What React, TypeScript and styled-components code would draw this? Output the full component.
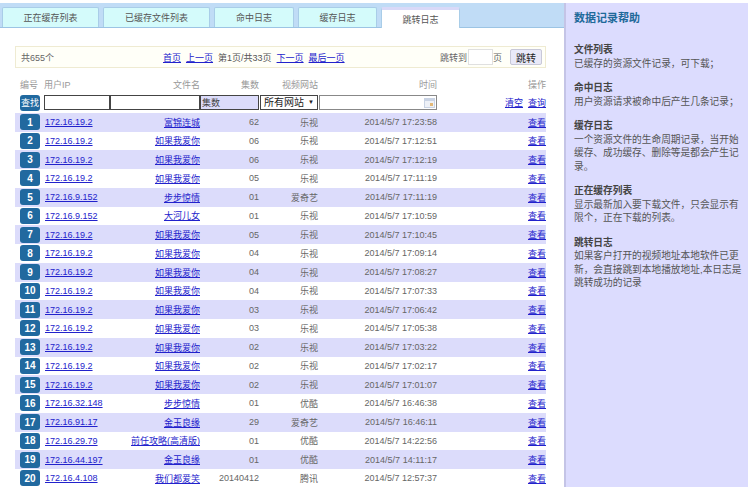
import styled, { createGlobalStyle } from 'styled-components'

const tabs = ['正在缓存列表', '已缓存文件列表', '命中日志', '缓存日志', '跳转日志']
const tabWidths = [97, 107, 80, 79, 79]

const rows = [
  ['172.16.19.2', '富锦连城', '62', '乐视', '2014/5/7 17:23:58'],
  ['172.16.19.2', '如果我爱你', '06', '乐视', '2014/5/7 17:12:51'],
  ['172.16.19.2', '如果我爱你', '06', '乐视', '2014/5/7 17:12:19'],
  ['172.16.19.2', '如果我爱你', '05', '乐视', '2014/5/7 17:11:19'],
  ['172.16.9.152', '步步惊情', '01', '爱奇艺', '2014/5/7 17:11:19'],
  ['172.16.9.152', '大河儿女', '01', '乐视', '2014/5/7 17:10:59'],
  ['172.16.19.2', '如果我爱你', '05', '乐视', '2014/5/7 17:10:45'],
  ['172.16.19.2', '如果我爱你', '04', '乐视', '2014/5/7 17:09:14'],
  ['172.16.19.2', '如果我爱你', '04', '乐视', '2014/5/7 17:08:27'],
  ['172.16.19.2', '如果我爱你', '04', '乐视', '2014/5/7 17:07:33'],
  ['172.16.19.2', '如果我爱你', '03', '乐视', '2014/5/7 17:06:42'],
  ['172.16.19.2', '如果我爱你', '03', '乐视', '2014/5/7 17:05:38'],
  ['172.16.19.2', '如果我爱你', '02', '乐视', '2014/5/7 17:03:22'],
  ['172.16.19.2', '如果我爱你', '02', '乐视', '2014/5/7 17:02:17'],
  ['172.16.19.2', '如果我爱你', '02', '乐视', '2014/5/7 17:01:07'],
  ['172.16.32.148', '步步惊情', '01', '优酷', '2014/5/7 16:46:38'],
  ['172.16.91.17', '金玉良缘', '29', '爱奇艺', '2014/5/7 16:46:11'],
  ['172.16.29.79', '前任攻略(高清版)', '01', '优酷', '2014/5/7 14:22:56'],
  ['172.16.44.197', '金玉良缘', '01', '优酷', '2014/5/7 14:11:17'],
  ['172.16.4.108', '我们都爱笑', '20140412', '腾讯', '2014/5/7 12:57:37'],
]

const help = [
  ['文件列表', '已缓存的资源文件记录，可下载；'],
  ['命中日志', '用户资源请求被命中后产生几条记录；'],
  ['缓存日志', '一个资源文件的生命周期记录，当开始缓存、成功缓存、删除等是都会产生记录。'],
  ['正在缓存列表', '显示最新加入要下载文件，只会显示有限个，正在下载的列表。'],
  ['跳转日志', '如果客户打开的视频地址本地软件已更新，会直接跳到本地播放地址,本日志是跳转成功的记录'],
]

function App() {
  return (
    <>
      <GlobalStyle />
      <Page>
        <Main>
          <TabBar>
            {tabs.map((tab, i) => (
              <Tab key={tab} active={i === 4} wide={tabWidths[i]}>
                {tab}
              </Tab>
            ))}
          </TabBar>

          <Pager>
            <Total>共655个</Total>
            <PagerLinks>
              <a href="#">首页</a>
              <a href="#">上一页</a>
              <span>第1页/共33页</span>
              <a href="#">下一页</a>
              <a href="#">最后一页</a>
            </PagerLinks>
            <Jump>
              <span>跳转到</span>
              <JumpInput />
              <span>页</span>
              <JumpButton>跳转</JumpButton>
            </Jump>
          </Pager>

          <HeadRow>
            <span>编号</span>
            <span>用户IP</span>
            <End>文件名</End>
            <End>集数</End>
            <End>视频网站</End>
            <End>时间</End>
            <End>操作</End>
          </HeadRow>

          <FilterRow>
            <SearchButton>查找</SearchButton>
            <FilterInput />
            <FilterInput />
            <FilterInput $shaded defaultValue="集数" />
            <SelectWrap>
              <SiteSelect defaultValue="所有网站">
                <option>所有网站</option>
              </SiteSelect>
              <SelectArrow>▼</SelectArrow>
            </SelectWrap>
            <DateBox>
              <svg width="11" height="10" viewBox="0 0 11 10">
                <rect width="11" height="10" fill="#c9d3e4" />
                <rect x="1" y="3" width="9" height="6" fill="#eef1f7" />
                <rect x="6" y="5" width="3" height="3" fill="#e2b878" />
              </svg>
            </DateBox>
            <Actions>
              <a href="#">清空</a>
              <a href="#">查询</a>
            </Actions>
          </FilterRow>

          {rows.map((row, i) => (
            <Row key={i} shaded={i % 2 === 0}>
              <Badge>{i + 1}</Badge>
              <a href="#">{row[0]}</a>
              <End><a href="#">{row[1]}</a></End>
              <End>{row[2]}</End>
              <End>{row[3]}</End>
              <End>{row[4]}</End>
              <End><a href="#">查看</a></End>
            </Row>
          ))}
        </Main>

        <Side>
          <SideTitle>数据记录帮助</SideTitle>
          {help.map(([title, text]) => (
            <HelpBlock key={title}>
              <strong>{title}</strong>
              <p>{text}</p>
            </HelpBlock>
          ))}
        </Side>
      </Page>
    </>
  )
}

const GlobalStyle = createGlobalStyle`
  html, body {
    margin: 0;
    height: 487px;
    overflow: hidden;
    background: #fff;
    font-family: "Liberation Sans", "Noto Sans CJK SC", sans-serif;
    font-size: 9px;
    color: #666;
  }
  a {
    color: #2222cc;
  }
`

const Page = styled.div`
  display: flex;
  height: 487px;
  padding-top: 3px;
  box-sizing: border-box;
`

const Main = styled.div`
  width: 564px;
  flex-shrink: 0;
`

const TabBar = styled.div`
  display: flex;
  align-items: flex-end;
  gap: 4px;
  height: 25px;
  padding-left: 2px;
  box-sizing: border-box;
  background: #c0dcf6;
  border-bottom: 1px solid #9cc4e4;
`

const Tab = styled.div<{ active: boolean; wide: number }>`
  width: ${({ wide }) => wide}px;
  height: ${({ active }) => (active ? 21 : 20)}px;
  margin-bottom: ${({ active }) => (active ? -1 : 0)}px;
  box-sizing: border-box;
  display: flex;
  align-items: center;
  justify-content: center;
  font-size: 9px;
  color: #555;
  border: 1px solid #a9cde8;
  border-bottom: none;
  border-radius: 2px 2px 0 0;
  background: ${({ active }) => (active ? '#fff' : '#d4fbfb')};
  border-top: ${({ active }) => (active ? '3px solid #d9d9f8' : '1px solid #a9cde8')};
`

const Pager = styled.div`
  display: flex;
  align-items: center;
  height: 22px;
  margin: 18px 18px 0 15px;
  padding: 0 3px 0 5px;
  box-sizing: border-box;
  background: #fffff8;
  border: 1px solid #efebd2;
`

const Total = styled.span`
  width: 142px;
`

const PagerLinks = styled.div`
  display: flex;
  gap: 5px;
  color: #555;
`

const Jump = styled.div`
  display: flex;
  align-items: center;
  margin-left: auto;
`

const JumpInput = styled.input`
  width: 25px;
  height: 16px;
  margin-left: 1px;
  padding: 0;
  box-sizing: border-box;
  background: #fff;
  border: 1px solid #e0e0e0;
`

const JumpButton = styled.button`
  width: 32px;
  height: 16px;
  margin-left: 8px;
  padding: 0;
  font: 10px "Liberation Sans", "Noto Sans CJK SC", sans-serif;
  color: #222;
  background: #e9e9f8;
  border: 1px solid #c8c8d8;
  border-radius: 2px;
`

const columns = '24px 66px 90px 59px 59px 119px 1fr'

const HeadRow = styled.div`
  display: grid;
  grid-template-columns: ${columns};
  align-items: center;
  height: 18px;
  margin: 7px 18px 0 15px;
  padding-left: 5px;
  box-sizing: border-box;
  color: #999;
`

const End = styled.div`
  text-align: right;
`

const FilterRow = styled.div`
  display: grid;
  grid-template-columns: ${columns};
  align-items: center;
  height: 19.75px;
  margin: 0 18px 0 15px;
  padding-left: 5px;
  box-sizing: border-box;
`

const Row = styled.div<{ shaded: boolean }>`
  display: grid;
  grid-template-columns: ${columns};
  align-items: center;
  height: 18.75px;
  margin: 0 18px 0 15px;
  padding-left: 5px;
  box-sizing: border-box;
  background: ${({ shaded }) => (shaded ? '#dcdcfb' : 'transparent')};
  > a {
    margin-left: 1px;
  }
`

const Badge = styled.div`
  width: 20px;
  height: 16px;
  display: flex;
  align-items: center;
  justify-content: center;
  font-size: 10px;
  font-weight: bold;
  color: #fff;
  background: #21699f;
  border-radius: 3px;
`

const SearchButton = styled.button`
  width: 20px;
  height: 16px;
  padding: 0;
  font: 9px "Liberation Sans", "Noto Sans CJK SC", sans-serif;
  color: #fff;
  background: #21699f;
  border: none;
  border-radius: 3px;
`

const FilterInput = styled.input<{ $shaded?: boolean }>`
  width: 100%;
  height: 15px;
  padding: 0 1px;
  box-sizing: border-box;
  font: 9px "Liberation Sans", "Noto Sans CJK SC", sans-serif;
  color: #444;
  background: ${({ $shaded }) => ($shaded ? '#dcdcfb' : '#fff')};
  border: 1px solid #444;
`

const SelectWrap = styled.div`
  position: relative;
  margin-left: 1px;
  height: 15px;
`

const SiteSelect = styled.select`
  appearance: none;
  display: block;
  width: 58px;
  height: 15px;
  padding: 0 0 0 3px;
  box-sizing: border-box;
  font: 10px "Liberation Sans", "Noto Sans CJK SC", sans-serif;
  color: #222;
  background: #fff;
  border: 1px solid #444;
  border-radius: 0;
`

const SelectArrow = styled.span`
  position: absolute;
  top: 3px;
  right: 4px;
  font-size: 6px;
  line-height: 9px;
  color: #222;
`

const DateBox = styled.div`
  display: flex;
  align-items: center;
  justify-content: flex-end;
  height: 15px;
  margin-left: 1px;
  padding-right: 1px;
  box-sizing: border-box;
  background: #fff;
  border: 1px solid #888;
`

const Actions = styled.div`
  display: flex;
  justify-content: flex-end;
  gap: 5px;
`

const Side = styled.div`
  flex: 1;
  padding: 9px 4px 0 8px;
  background: #dcdcfe;
  border-left: 2px solid #c4c4e6;
  font-size: 9.7px;
  line-height: 13.5px;
  color: #555;
`

const SideTitle = styled.div`
  margin-bottom: 18px;
  font-size: 11px;
  line-height: 13px;
  font-weight: bold;
  color: #1f6a9a;
`

const HelpBlock = styled.div`
  margin-bottom: 11px;
  strong {
    display: block;
    color: #444;
  }
  p {
    margin: 0;
  }
`

export default App
